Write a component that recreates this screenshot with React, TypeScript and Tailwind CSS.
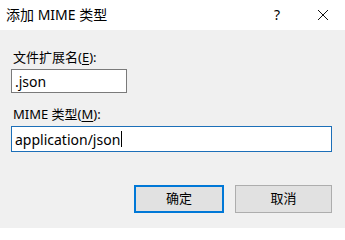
import React from 'react';

const FONT = '"Segoe UI", "Noto Sans", "Noto Sans CJK SC", sans-serif';

function Underlined({ ch }: { ch: string }) {
  return <span className="underline underline-offset-2">{ch}</span>;
}

export default function App() {
  return (
    <div
      className="flex h-[228px] w-[345px] flex-col overflow-hidden bg-[#f0f0f0] text-black"
      style={{ fontFamily: FONT }}
    >
      {/* title bar */}
      <div className="flex h-[30px] shrink-0 items-center bg-white pl-[6px] text-[14px]">
        <span className="leading-none">添加 MIME 类型</span>
        <span className="ml-auto mr-[37px] text-[14px] leading-none">?</span>
        <svg width="12" height="12" viewBox="0 0 12 12" className="mr-[16px]">
          <path d="M1 1 L11 11 M11 1 L1 11" stroke="#111" strokeWidth="1" fill="none" />
        </svg>
      </div>

      {/* body */}
      <div className="flex flex-col pl-[11px] pt-[18px] text-[13px]">
        <div className="pl-[2px] leading-[18px]">
          文件扩展名(<Underlined ch="E" />):
        </div>
        <div className="mt-[3px] flex h-[24px] w-[116px] items-center border border-[#7a7a7a] bg-white pl-[3px] text-[14px]">
          .json
        </div>

        <div className="mt-[12px] pl-[2px] leading-[18px]">
          MIME 类型(<Underlined ch="M" />):
        </div>
        <div className="mt-[3px] flex h-[26px] w-[321px] items-center border border-[#1c6fb8] bg-white pl-[3px] text-[14px]">
          application/json
          <span className="ml-[1px] inline-block h-[16px] w-px bg-black" />
        </div>

        <div className="mt-[33px] flex gap-[11px] pl-[123px]">
          <button className="flex h-[28px] w-[90px] items-center justify-center border-2 border-[#0078d7] bg-[#e1e1e1] text-[13px]">
            确定
          </button>
          <button className="flex h-[28px] w-[97px] items-center justify-center border border-[#adadad] bg-[#e1e1e1] text-[13px]">
            取消
          </button>
        </div>
      </div>
    </div>
  );
}
